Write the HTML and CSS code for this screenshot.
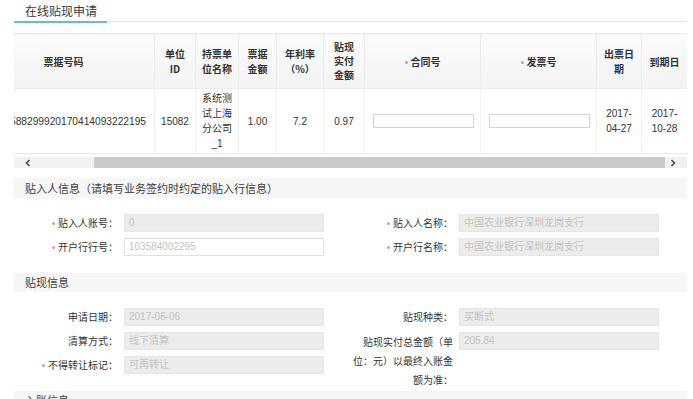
FILE: index.html
```html
<!DOCTYPE html>
<html lang="zh-CN">
<head>
<meta charset="utf-8">
<title>在线贴现申请</title>
<link rel="stylesheet" href="styles.css">
</head>
<body>
<div class="page">
  <div class="tabs"><span class="tab">在线贴现申请</span></div>

  <div class="grid-wrap">
    <div class="grid-scroll">
      <table class="bills">
        <colgroup>
          <col class="c-no"><col class="c-id"><col class="c-name"><col class="c-amt"><col class="c-rate">
          <col class="c-pay"><col class="c-in"><col class="c-in"><col class="c-date"><col class="c-due">
        </colgroup>
        <thead>
          <tr>
            <th>票据号码</th>
            <th>单位<br>ID</th>
            <th>持票单<br>位名称</th>
            <th>票据<br>金额</th>
            <th>年利率<br>（%）</th>
            <th class="tight">贴现<br>实付<br>金额</th>
            <th><i class="req"></i>合同号</th>
            <th><i class="req"></i>发票号</th>
            <th>出票日<br>期</th>
            <th>到期日</th>
          </tr>
        </thead>
        <tbody>
          <tr>
            <td><div class="num">1306588299920170414093222195</div></td>
            <td>15082</td>
            <td>系统测<br>试上海<br>分公司<br>_1</td>
            <td>1.00</td>
            <td>7.2</td>
            <td>0.97</td>
            <td class="in-cell"><div class="cell-input"></div></td>
            <td class="in-cell"><div class="cell-input"></div></td>
            <td>2017-<br>04-27</td>
            <td>2017-<br>10-28</td>
          </tr>
        </tbody>
      </table>
    </div>
    <div class="hscroll">
      <span class="arrow"><svg width="6" height="8" viewBox="0 0 6 8"><polyline points="4.5,1 1.5,4 4.5,7" fill="none" stroke="#4a4a4a" stroke-width="1.6"/></svg></span>
      <span class="track"><span class="thumb"></span></span>
      <span class="arrow right"><svg width="6" height="8" viewBox="0 0 6 8"><polyline points="1.5,1 4.5,4 1.5,7" fill="none" stroke="#4a4a4a" stroke-width="1.6"/></svg></span>
    </div>
  </div>

  <div class="sec-head first">贴入人信息（请填写业务签约时约定的贴入行信息）</div>
  <div class="fields">
    <span class="lbl"><i class="req"></i>贴入人账号：</span>
    <span class="inp dis">0</span>
    <span class="lbl"><i class="req"></i>贴入人名称：</span>
    <span class="inp dis">中国农业银行深圳龙岗支行</span>

    <span class="lbl"><i class="req"></i>开户行行号：</span>
    <span class="inp">103584002295</span>
    <span class="lbl"><i class="req"></i>开户行名称：</span>
    <span class="inp dis">中国农业银行深圳龙岗支行</span>
  </div>

  <div class="sec-head">贴现信息</div>
  <div class="fields">
    <span class="lbl">申请日期：</span>
    <span class="inp dis">2017-06-06</span>
    <span class="lbl">贴现种类：</span>
    <span class="inp dis">买断式</span>

    <span class="lbl">清算方式：</span>
    <span class="inp dis">线下清算</span>
    <span class="lbl long">贴现实付总金额（单位：元）以最终入账金额为准：</span>
    <span class="inp dis">205.84</span>

    <span class="lbl"><i class="req"></i>不得转让标记：</span>
    <span class="inp dis">可再转让</span>
  </div>

  <div class="sec-head">入账信息</div>
</div>
</body>
</html>
```

FILE: styles.css
```css
* { box-sizing: border-box; }

html, body {
  margin: 0;
  padding: 0;
  background: #fff;
}

body {
  font-family: "Liberation Sans", "Noto Sans CJK SC", sans-serif;
  font-size: 10px;
  color: #333;
  overflow: hidden;
  text-spacing-trim: space-all;
  font-feature-settings: "chws" 0, "halt" 0, "palt" 0;
}

.page {
  padding: 0 6px 0 14px;
  height: 399px;
  overflow: hidden;
}

/* title tab */
.tabs {
  display: flex;
  align-items: flex-start;
  height: 22px;
  border-bottom: 1px solid #e8e8e8;
}

.tab {
  font-family: "Noto Sans CJK SC", sans-serif;
  font-size: 12px;
  line-height: 21px;
  color: #3a3a3a;
  padding: 0 10px 0 11px;
  border-bottom: 2px solid #62c2bc;
}

/* data grid */
.grid-wrap {
  margin-top: 11px;
}

.grid-scroll {
  overflow: hidden;
}

.bills {
  width: 715px;
  margin-left: -42px;
  border-collapse: collapse;
  table-layout: fixed;
}

.c-no { width: 182px; }
.c-id { width: 41px; }
.c-name { width: 43px; }
.c-amt { width: 38px; }
.c-rate { width: 47px; }
.c-pay { width: 41px; }
.c-in { width: 116px; }
.c-date { width: 45px; }
.c-due { width: 46px; }

.bills th {
  height: 55px;
  background: linear-gradient(#fbfbfb, #f3f3f3);
  border: 1px solid #ebebeb;
  font-family: "Noto Sans CJK SC", "Liberation Sans", sans-serif;
  font-weight: bold;
  font-size: 10px;
  line-height: 15px;
  color: #333;
  text-align: center;
  padding: 0 2px;
}

.bills th.tight {
  line-height: 14px;
}

.bills td {
  height: 65px;
  border: 1px solid #f1f1f1;
  border-bottom-color: #e9e9e9;
  font-size: 10px;
  line-height: 15px;
  color: #333;
  text-align: center;
  padding: 0 2px;
}

.num {
  display: flex;
  justify-content: flex-end;
  white-space: nowrap;
  overflow: hidden;
  padding-right: 6px;
  font-size: 10.2px;
}

.bills td.in-cell {
  padding: 0 7px 0 8px;
}

.cell-input {
  height: 14px;
  width: 101px;
  border: 1px solid #d4d4d4;
  background: #fff;
}

.req {
  display: inline-block;
  width: 3px;
  height: 3px;
  border-radius: 50%;
  background: #e59494;
  vertical-align: middle;
  margin: -1px 3px 0 0;
}

/* horizontal scrollbar */
.hscroll {
  display: grid;
  grid-template-columns: 28px 1fr 22px;
  height: 11px;
  margin-top: 3px;
  background: #f1f1f1;
}

.arrow {
  display: flex;
  align-items: center;
  justify-content: center;
}

.arrow.right {
  justify-content: flex-start;
  padding-left: 5px;
}

.track {
  display: flex;
}

.thumb {
  flex: 1;
  margin-left: 52px;
  background: #c9c9c9;
}

/* sections */
.sec-head {
  margin-top: 17px;
  height: 19px;
  line-height: 19px;
  background: #f6f6f6;
  padding-left: 11px;
  font-family: "Noto Sans CJK SC", sans-serif;
  font-size: 11px;
  color: #3d3d3d;
}

.sec-head.first {
  margin-top: 10px;
  height: 20px;
  line-height: 20px;
}

.fields {
  display: grid;
  grid-template-columns: 110px 200px 135px 200px;
  grid-auto-rows: 18px;
  row-gap: 6px;
  margin-top: 16px;
}

.lbl {
  justify-self: end;
  text-align: right;
  padding-right: 6px;
  font-family: "Noto Sans CJK SC", sans-serif;
  font-size: 10px;
  line-height: 18px;
  color: #333;
  white-space: nowrap;
}

.lbl.long {
  white-space: normal;
  width: 108px;
  line-height: 19px;
  align-self: start;
}

.inp {
  display: block;
  height: 18px;
  border: 1px solid #e0e0e0;
  background: #fff;
  font-size: 10px;
  line-height: 16px;
  padding-left: 4px;
  color: #c2c2c2;
  white-space: nowrap;
  overflow: hidden;
}

.inp.dis {
  background: #ececec;
  border-color: #e6e6e6;
}
```
